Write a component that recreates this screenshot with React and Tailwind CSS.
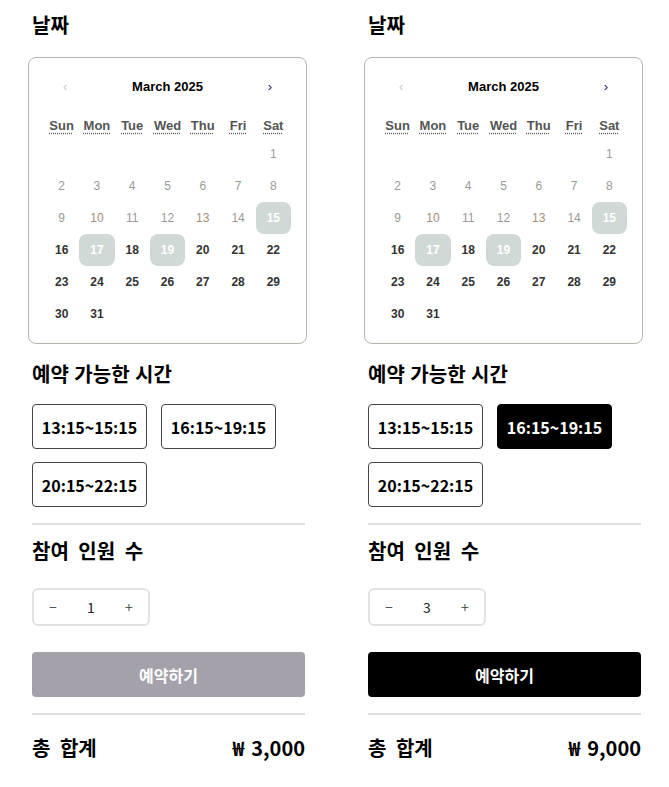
import { useState } from "react";

const weekdays = ["Sun", "Mon", "Tue", "Wed", "Thu", "Fri", "Sat"];
const times = ["13:15~15:15", "16:15~19:15", "20:15~22:15"];
const available = [15, 17, 19];
const PRICE = 3000;

const Calendar = () => {
  const cells = [...Array(6).fill(null), ...Array.from({ length: 31 }, (_, i) => i + 1)];

  return (
    <div className="-ml-1 w-[279px] rounded-[8px] border border-[#b5b5ad] px-[15px] pt-[16px] pb-[13px] [font-family:'Liberation_Sans',Arial,sans-serif]">
      <div className="flex h-[26px] items-center justify-between px-[19px] text-[13px]">
        <button className="text-[#c8c8c8]">‹</button>
        <span className="text-[13px] font-bold text-black">March 2025</span>
        <button className="text-[#1a1a4a]">›</button>
      </div>
      <div className="mt-[14px] grid grid-cols-7">
        {weekdays.map((d) => (
          <div key={d} className="flex h-[24px] items-center justify-center">
            <abbr className="text-[13px] font-bold text-[#555] underline decoration-dotted underline-offset-[3px]">
              {d}
            </abbr>
          </div>
        ))}
      </div>
      <div className="grid grid-cols-7">
        {cells.map((n, i) => {
          if (!n) return <div key={i} className="h-[32px]" />;
          const on = available.includes(n);
          const past = n < 16;
          let cls = "text-[#333] font-bold";
          if (past) cls = n === 10 || n === 13 ? "text-[#a38d7d]" : "text-[#9a9a9a]";
          if (on) cls = "bg-[#d0d9d6] text-white font-bold rounded-[8px]";
          return (
            <div key={i} className={`flex h-[32px] items-center justify-center text-[12px] ${cls}`}>
              {n}
            </div>
          );
        })}
      </div>
    </div>
  );
};

const Panel = ({ initialTime, initialCount }) => {
  const [time, setTime] = useState(initialTime);
  const [count, setCount] = useState(initialCount);
  const ready = time !== null;

  return (
    <div className="w-[336px] shrink-0 pl-8 pt-[11px]">
      <div className="w-[273px]">
        <h2 className="h-[28px] text-[20px] font-bold leading-[28px] text-black">날짜</h2>
        <div className="mt-[18px]">
          <Calendar />
        </div>

        <h2 className="mt-[16px] h-[28px] text-[20px] font-bold leading-[28px] text-black [word-spacing:1px]">
          예약 가능한 시간
        </h2>
        <div className="mt-[16px] flex w-[260px] flex-wrap gap-x-[14px] gap-y-[13px]">
          {times.map((t) => (
            <button
              key={t}
              onClick={() => setTime(t)}
              className={`h-[45px] w-[115px] rounded-[4px] border text-[16px] font-bold ${
                time === t ? "border-black bg-black text-white" : "border-[#444] bg-white text-black"
              }`}
            >
              {t}
            </button>
          ))}
        </div>

        <hr className="mt-[16px] border-0 border-t-2 border-[#dedede]" />

        <h2 className="mt-[12px] h-[28px] text-[20px] font-bold leading-[28px] text-black [word-spacing:5px]">
          참여 인원 수
        </h2>
        <div className="mt-[23px] grid h-[38px] w-[118px] grid-cols-3 items-center rounded-[6px] border-2 border-[#e2e2e2] text-[14px]">
          <button onClick={() => setCount(Math.max(1, count - 1))} className="text-[#555]">
            −
          </button>
          <span className="text-center text-[#222]">{count}</span>
          <button onClick={() => setCount(count + 1)} className="text-[#555]">
            +
          </button>
        </div>

        <button
          disabled={!ready}
          className={`mt-[26px] h-[45px] w-full rounded-[4px] text-[16px] font-bold text-white ${
            ready ? "bg-black" : "bg-[#a4a1ab]"
          }`}
        >
          예약하기
        </button>

        <hr className="mt-[16px] border-0 border-t-2 border-[#dedede]" />

        <div className="mt-[19px] flex h-[28px] items-center justify-between text-[20px] font-bold text-black">
          <span className="[word-spacing:5px]">총 합계</span>
          <span className="flex items-center gap-[7px]">
            <span>₩</span>
            <span>{(PRICE * count).toLocaleString("en-US")}</span>
          </span>
        </div>
      </div>
    </div>
  );
};

export default function App() {
  return (
    <div className="flex min-h-screen bg-white [font-family:'Noto_Sans_CJK_KR','Noto_Sans',sans-serif]">
      <Panel initialTime={null} initialCount={1} />
      <Panel initialTime="16:15~19:15" initialCount={3} />
    </div>
  );
}
